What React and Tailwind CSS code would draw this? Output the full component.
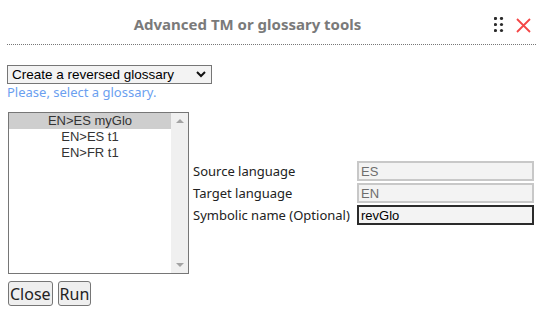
import React from 'react';

const Grip = () => (
  <svg width="10" height="16" viewBox="0 0 10 16" className="block">
    {[0, 1, 2].map((r) =>
      [0, 1].map((c) => (
        <circle key={`${r}-${c}`} cx={1.5 + c * 6} cy={1.5 + r * 6} r="1.6" fill="#2b2b2b" />
      ))
    )}
  </svg>
);

const CloseX = () => (
  <svg width="15" height="15" viewBox="0 0 15 15" className="block">
    <path d="M1 1 L14 14 M14 1 L1 14" stroke="#f44646" strokeWidth="1.8" fill="none" />
  </svg>
);

const glossaries = ['EN>ES myGlo', 'EN>ES t1', 'EN>FR t1'];

const fields = [
  { label: 'Source language', value: 'ES', disabled: true },
  { label: 'Target language', value: 'EN', disabled: true },
  { label: 'Symbolic name (Optional)', value: 'revGlo', disabled: false },
];

export default function App() {
  return (
    <div className="w-[546px] h-[312px] bg-white pl-[7px] pr-[10px] font-['Noto_Sans',sans-serif] overflow-hidden">
      {/* Header */}
      <div className="flex items-center h-[45px] border-b border-dotted border-[#777]">
        <div className="flex-1 text-center text-[15px] font-bold text-[#7a7a7a] pt-[5px]">
          Advanced TM or glossary tools
        </div>
        <div className="flex items-center w-[48px] pl-[6px] gap-[12px] pt-[6px]">
          <Grip />
          <CloseX />
        </div>
      </div>

      {/* Action select */}
      <div className="pt-[20px]">
        <div className="relative w-[205px]">
          <select
            defaultValue="rev"
            className="appearance-none block w-[205px] h-[19px] border border-[#767676] bg-[#f3f3f3] pl-[4px] text-[13.5px] leading-[17px] text-black font-['Liberation_Sans',sans-serif] rounded-none"
          >
            <option value="rev">Create a reversed glossary</option>
          </select>
          <svg width="10" height="7" viewBox="0 0 10 7" className="absolute right-[6px] top-[6px] pointer-events-none">
            <path d="M1 1 L5 5 L9 1" stroke="#111" strokeWidth="2" fill="none" />
          </svg>
        </div>
        <div className="text-[13px] leading-[17px] text-[#6b9ff0]">Please, select a glossary.</div>
      </div>

      {/* List and fields */}
      <div className="flex items-center mt-[11px]">
        <div className="flex w-[181px] h-[162px] border border-[#767676] ml-[1px] font-['Liberation_Sans',sans-serif] text-[13px] text-[#333]">
          <div className="flex-1">
            {glossaries.map((g, i) => (
              <div
                key={g}
                className={`h-[16px] leading-[16px] text-center ${i === 0 ? 'bg-[#cecece]' : ''}`}
              >
                {g}
              </div>
            ))}
          </div>
          <div className="w-[17px] bg-[#f0f0f0] flex flex-col justify-between items-center py-[6px]">
            <svg width="8" height="4" viewBox="0 0 8 4"><path d="M0 4 L4 0 L8 4 Z" fill="#a3a3a3" /></svg>
            <svg width="8" height="4" viewBox="0 0 8 4"><path d="M0 0 L4 4 L8 0 Z" fill="#a3a3a3" /></svg>
          </div>
        </div>

        <div className="flex flex-col gap-[2px] ml-[4px]">
          {fields.map((f) => (
            <div key={f.label} className="flex items-center">
              <div className="w-[164px] text-[13px] text-[#222] leading-[20px]">{f.label}</div>
              <input
                readOnly
                disabled={f.disabled}
                value={f.value}
                className={`w-[177px] h-[20px] px-[2px] text-[13px] font-['Liberation_Sans',sans-serif] outline-none ${
                  f.disabled
                    ? 'border-2 border-[#c8c8c8] bg-[#f3f3f3] text-[#6d6d6d]'
                    : 'border-2 border-[#2b2b2b] bg-[#f3f3f3] text-black'
                }`}
              />
            </div>
          ))}
        </div>
      </div>

      {/* Buttons */}
      <div className="flex gap-[5px] mt-[7px] ml-[1px]">
        <button className="h-[25px] px-[1px] border border-[#767676] rounded-[3px] bg-[#efefef] text-[16px] text-[#222] leading-none">
          Close
        </button>
        <button className="h-[25px] px-[1px] border border-[#767676] rounded-[3px] bg-[#efefef] text-[16px] text-[#222] leading-none">
          Run
        </button>
      </div>
    </div>
  );
}
